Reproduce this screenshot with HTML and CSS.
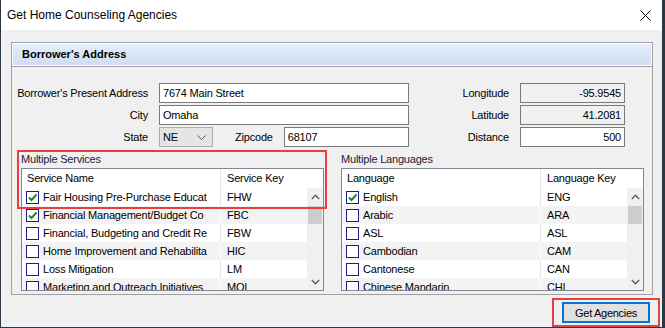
FILE: index.html
```html
<!DOCTYPE html>
<html lang="en">
<head>
    <meta charset="UTF-8">
    <meta name="viewport" content="width=device-width, initial-scale=1.0">
    <title>Get Home Counseling Agencies</title>
    <link rel="stylesheet" href="styles.css">
</head>
<body>
    <div class="window">
        <div class="titlebar">
            <span class="title">Get Home Counseling Agencies</span>
            <svg class="close" width="11" height="11" viewBox="0 0 11 11">
                <path d="M0.5 0.5 L10.5 10.5 M10.5 0.5 L0.5 10.5" stroke="#000" stroke-width="1" fill="none"/>
            </svg>
        </div>

        <div class="client">
            <div class="panel">
                <div class="panel-header">Borrower's Address</div>
                <div class="panel-body">
                    <div class="form">
                        <div class="address-grid">
                            <label>Borrower's Present Address</label>
                            <div class="field">7674 Main Street</div>
                            <label>City</label>
                            <div class="field">Omaha</div>
                            <label>State</label>
                            <div class="state-row">
                                <div class="select">
                                    <span>NE</span>
                                    <svg width="9" height="5" viewBox="0 0 9 5">
                                        <path d="M0.5 0.5 L4.5 4.5 L8.5 0.5" stroke="#555" stroke-width="1" fill="none"/>
                                    </svg>
                                </div>
                                <label class="zip-label">Zipcode</label>
                                <div class="field">68107</div>
                            </div>
                        </div>
                        <div class="geo-grid">
                            <label>Longitude</label>
                            <div class="field readonly">-95.9545</div>
                            <label>Latitude</label>
                            <div class="field readonly">41.2081</div>
                            <label>Distance</label>
                            <div class="field number">500</div>
                        </div>
                    </div>

                    <div class="lists">
                        <div class="list-group">
                            <div class="group-label">Multiple Services</div>
                            <div class="listview">
                                <div class="lv-header">
                                    <div class="col-name">Service Name</div>
                                    <div class="col-key">Service Key</div>
                                </div>
                                <div class="lv-body">
                                    <div class="lv-rows">
                                        <div class="row">
                                            <div class="col-name"><span class="cb checked"><svg width="11" height="11" viewBox="0 0 11 11"><path d="M2 5.5 L4.5 8 L9.5 2.5" stroke="#1d8a1d" stroke-width="2" fill="none"/></svg></span><span class="text">Fair Housing Pre-Purchase Educat</span></div>
                                            <div class="col-key">FHW</div>
                                        </div>
                                        <div class="row">
                                            <div class="col-name"><span class="cb checked"><svg width="11" height="11" viewBox="0 0 11 11"><path d="M2 5.5 L4.5 8 L9.5 2.5" stroke="#1d8a1d" stroke-width="2" fill="none"/></svg></span><span class="text">Financial Management/Budget Co</span></div>
                                            <div class="col-key">FBC</div>
                                        </div>
                                        <div class="row">
                                            <div class="col-name"><span class="cb"></span><span class="text">Financial, Budgeting and Credit Re</span></div>
                                            <div class="col-key">FBW</div>
                                        </div>
                                        <div class="row">
                                            <div class="col-name"><span class="cb"></span><span class="text">Home Improvement and Rehabilita</span></div>
                                            <div class="col-key">HIC</div>
                                        </div>
                                        <div class="row">
                                            <div class="col-name"><span class="cb"></span><span class="text">Loss Mitigation</span></div>
                                            <div class="col-key">LM</div>
                                        </div>
                                        <div class="row">
                                            <div class="col-name"><span class="cb"></span><span class="text">Marketing and Outreach Initiatives</span></div>
                                            <div class="col-key">MOI</div>
                                        </div>
                                    </div>
                                    <div class="scrollbar">
                                        <div class="sb-btn"><svg width="9" height="6" viewBox="0 0 9 6"><path d="M0.8 5 L4.5 1.3 L8.2 5" stroke="#606060" stroke-width="1.5" fill="none"/></svg></div>
                                        <div class="sb-thumb"></div>
                                        <div class="sb-track"></div>
                                        <div class="sb-btn"><svg width="9" height="6" viewBox="0 0 9 6"><path d="M0.8 1 L4.5 4.7 L8.2 1" stroke="#606060" stroke-width="1.5" fill="none"/></svg></div>
                                    </div>
                                </div>
                            </div>
                            <div class="highlight services-mark"></div>
                        </div>

                        <div class="list-group">
                            <div class="group-label">Multiple Languages</div>
                            <div class="listview">
                                <div class="lv-header">
                                    <div class="col-name">Language</div>
                                    <div class="col-key">Language Key</div>
                                </div>
                                <div class="lv-body">
                                    <div class="lv-rows">
                                        <div class="row">
                                            <div class="col-name"><span class="cb checked"><svg width="11" height="11" viewBox="0 0 11 11"><path d="M2 5.5 L4.5 8 L9.5 2.5" stroke="#1d8a1d" stroke-width="2" fill="none"/></svg></span><span class="text">English</span></div>
                                            <div class="col-key">ENG</div>
                                        </div>
                                        <div class="row">
                                            <div class="col-name"><span class="cb"></span><span class="text">Arabic</span></div>
                                            <div class="col-key">ARA</div>
                                        </div>
                                        <div class="row">
                                            <div class="col-name"><span class="cb"></span><span class="text">ASL</span></div>
                                            <div class="col-key">ASL</div>
                                        </div>
                                        <div class="row">
                                            <div class="col-name"><span class="cb"></span><span class="text">Cambodian</span></div>
                                            <div class="col-key">CAM</div>
                                        </div>
                                        <div class="row">
                                            <div class="col-name"><span class="cb"></span><span class="text">Cantonese</span></div>
                                            <div class="col-key">CAN</div>
                                        </div>
                                        <div class="row">
                                            <div class="col-name"><span class="cb"></span><span class="text">Chinese Mandarin</span></div>
                                            <div class="col-key">CHI</div>
                                        </div>
                                    </div>
                                    <div class="scrollbar">
                                        <div class="sb-btn"><svg width="9" height="6" viewBox="0 0 9 6"><path d="M0.8 5 L4.5 1.3 L8.2 5" stroke="#606060" stroke-width="1.5" fill="none"/></svg></div>
                                        <div class="sb-thumb"></div>
                                        <div class="sb-track"></div>
                                        <div class="sb-btn"><svg width="9" height="6" viewBox="0 0 9 6"><path d="M0.8 1 L4.5 4.7 L8.2 1" stroke="#606060" stroke-width="1.5" fill="none"/></svg></div>
                                    </div>
                                </div>
                            </div>
                        </div>
                    </div>
                </div>
            </div>

            <div class="actions">
                <button class="btn">Get Agencies<span class="highlight button-mark"></span></button>
            </div>
        </div>
    </div>
</body>
</html>
```

FILE: styles.css
```css
body {
    margin: 0;
    width: 665px;
    height: 328px;
    overflow: hidden;
    background-color: #2c3846;
    font-family: "Liberation Sans", Arial, sans-serif;
}
.window {
    margin: 0 3px 0 1px;
    height: 327px;
    background-color: #f0f0f0;
    display: flex;
    flex-direction: column;
}
.titlebar {
    height: 30px;
    flex: none;
    background-color: #fff;
    display: flex;
    align-items: center;
    justify-content: space-between;
    padding: 0 11px 0 6px;
    font-size: 12px;
    color: #000;
}
.client {
    flex: 1;
    padding: 12px 9px 0 10px;
    display: flex;
    flex-direction: column;
    font-size: 11px;
    letter-spacing: -0.2px;
    color: #000;
}
.panel {
    height: 253px;
    box-sizing: border-box;
    border: 1px solid #a0a0a0;
    display: flex;
    flex-direction: column;
}
.panel-header {
    height: 23px;
    line-height: 23px;
    padding-left: 10px;
    font-weight: bold;
    letter-spacing: 0;
    border-bottom: 1px solid #a0a0a0;
    box-shadow: inset 0 0 0 1px #fff;
    background: linear-gradient(#e6eefa, #cfdcf1);
}
.panel-body {
    padding: 16px 7px 0 9px;
}
.form {
    display: flex;
    gap: 10px;
}
.address-grid {
    display: grid;
    grid-template-columns: 127px 250px;
    grid-auto-rows: 20px;
    column-gap: 11px;
    row-gap: 2px;
}
.geo-grid {
    display: grid;
    grid-template-columns: 90px 105px;
    grid-auto-rows: 20px;
    column-gap: 11px;
    row-gap: 2px;
}
label {
    display: flex;
    align-items: center;
    justify-content: flex-end;
    white-space: nowrap;
}
.field {
    box-sizing: border-box;
    height: 20px;
    line-height: 18px;
    border: 1px solid #7a7a7a;
    background-color: #fff;
    padding: 0 3px;
    white-space: nowrap;
}
.readonly {
    background-color: #f0f0f0;
    text-align: right;
}
.number {
    text-align: right;
}
.state-row {
    display: flex;
}
.select {
    width: 54px;
    box-sizing: border-box;
    border: 1px solid #adadad;
    background-color: #e5e5e5;
    display: flex;
    align-items: center;
    justify-content: space-between;
    padding: 0 6px 0 3px;
}
.zip-label {
    margin: 0 11px 0 22px;
}
.state-row .field {
    flex: 1;
}
.lists {
    display: flex;
    gap: 17px;
    margin-top: 5px;
}
.list-group {
    width: 303px;
    position: relative;
}
.group-label {
    line-height: 14px;
    margin-bottom: 2px;
    color: #1a1a3c;
}
.listview {
    height: 123px;
    box-sizing: border-box;
    border: 1px solid #828790;
    background-color: #fff;
    display: flex;
    flex-direction: column;
    overflow: hidden;
}
.lv-header {
    height: 19px;
    flex: none;
    display: flex;
    line-height: 19px;
}
.col-name {
    width: 199px;
    box-sizing: border-box;
    flex: none;
    border-right: 1px solid #e5e5e5;
    padding-left: 5px;
    display: flex;
    align-items: center;
    white-space: nowrap;
    overflow: hidden;
}
.col-key {
    flex: 1;
    padding-left: 6px;
    white-space: nowrap;
}
.lv-body {
    flex: 1;
    display: flex;
    overflow: hidden;
}
.lv-rows {
    flex: 1;
    overflow: hidden;
}
.row {
    height: 18px;
    display: flex;
    align-items: center;
    line-height: 18px;
}
.row .col-name {
    padding-left: 4px;
    height: 18px;
}
.row:nth-child(even) {
    background-color: #f3f3f3;
}
.row:nth-child(even) .col-name {
    border-right-color: #fff;
}
.cb {
    width: 13px;
    height: 13px;
    box-sizing: border-box;
    flex: none;
    border: 1px solid #1c1c8a;
    background-color: #fff;
    margin-right: 4px;
    display: flex;
    align-items: center;
    justify-content: center;
}
.text {
    white-space: nowrap;
}
.scrollbar {
    width: 16px;
    flex: none;
    background-color: #f0f0f0;
    display: flex;
    flex-direction: column;
}
.sb-btn {
    height: 17px;
    flex: none;
    display: flex;
    align-items: center;
    justify-content: center;
}
.sb-thumb {
    height: 18px;
    margin: 1px 1px 0;
    background-color: #cdcdcd;
}
.sb-track {
    flex: 1;
}
.actions {
    display: flex;
    justify-content: flex-end;
    padding: 7px 3px 0 0;
}
.btn {
    width: 88px;
    height: 21px;
    border: 2px solid #0078d7;
    background-color: #e1e1e1;
    font-family: "Liberation Sans", Arial, sans-serif;
    font-size: 11px;
    letter-spacing: -0.3px;
    color: #000;
    padding: 0;
    position: relative;
}
.highlight {
    position: absolute;
    border: 2px solid #e8403f;
    pointer-events: none;
}
.services-mark {
    left: -4px;
    right: -3px;
    top: -2px;
    height: 59px;
    box-sizing: border-box;
}
.button-mark {
    left: -12px;
    right: -12px;
    top: -6px;
    bottom: -6px;
}
```
